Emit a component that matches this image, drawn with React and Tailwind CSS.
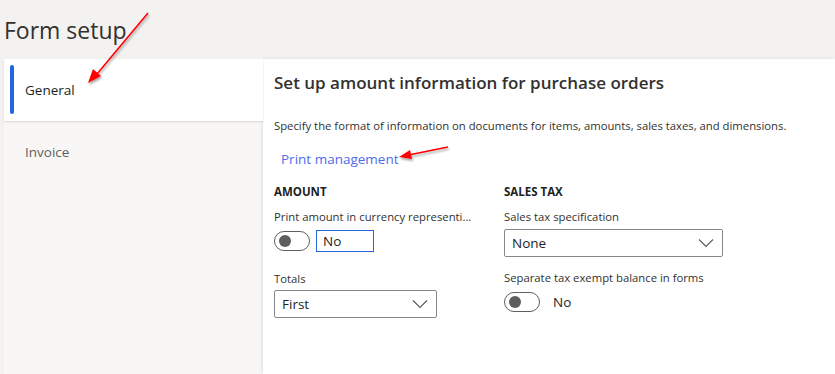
import { useState } from 'react'

const font = { fontFamily: '"Segoe UI", "Open Sans", "Noto Sans", sans-serif' }

function Toggle({ on }) {
  return (
    <div className="w-[36px] h-[20px] rounded-full border border-[#605e5c] bg-white flex items-center px-[4px]">
      <div className={`w-[12px] h-[12px] rounded-full bg-[#605e5c] ${on ? 'ml-auto' : ''}`} />
    </div>
  )
}

function Select({ value, width }) {
  return (
    <div className={`${width} h-[28px] border border-[#8a8886] rounded-[2px] bg-white flex items-center justify-between pl-[7px] pr-[8px]`}>
      <span className="text-[13.5px] text-[#201f1e]">{value}</span>
      <svg width="16" height="10" viewBox="0 0 16 10" fill="none">
        <path d="M1 1.5 L8 8.5 L15 1.5" stroke="#605e5c" strokeWidth="1.2" />
      </svg>
    </div>
  )
}

export default function App() {
  const [tab, setTab] = useState('General')

  return (
    <div className="relative w-[835px] h-[374px] bg-[#f3f2f1] overflow-hidden text-[#323130]" style={font}>
      <h1 className="pl-[4px] pt-[14px] h-[59px] text-[23px] leading-[32px] font-normal text-[#323130]">Form setup</h1>

      <div className="flex ml-[4px] h-[315px]">
        <div className="w-[259px] bg-[#f8f7f6] flex flex-col">
          {['General', 'Invoice'].map((t) => (
            <div
              key={t}
              onClick={() => setTab(t)}
              className={`h-[62px] flex items-center pl-[21px] relative cursor-pointer ${tab === t ? 'bg-white shadow-[0_1px_2px_rgba(0,0,0,0.12)] text-[#201f1e]' : 'text-[#605e5c]'}`}
            >
              {tab === t && <div className="absolute left-[6px] top-[6px] bottom-[7px] w-[4px] rounded-full bg-[#2266e3]" />}
              <span className="text-[13.5px]">{t}</span>
            </div>
          ))}
        </div>

        <div className="flex-1 bg-white shadow-[-1px_0_3px_rgba(0,0,0,0.1)] pl-[11px] pt-[12px]">
          <h2 className="text-[17px] leading-[24px] font-semibold text-[#323130]">Set up amount information for purchase orders</h2>
          <p className="mt-[23px] text-[11.3px] leading-[16px] text-[#323130]">
            Specify the format of information on documents for items, amounts, sales taxes, and dimensions.
          </p>
          <div className="mt-[16px] pl-[7px] text-[13.5px] leading-[18px] text-[#4f6bed]">Print management</div>

          <div className="flex mt-[16px]">
            <div className="w-[230px]">
              <div className="text-[11.5px] leading-[16px] font-bold text-[#201f1e]">AMOUNT</div>
              <div className="mt-[9px] text-[11.3px] leading-[16px] text-[#323130]">Print amount in currency representi...</div>
              <div className="mt-[5px] flex items-center gap-[6px]">
                <Toggle on={false} />
                <div className="w-[58px] h-[22px] border border-[#2266e3] flex items-center pl-[6px] text-[13.5px] text-[#201f1e]">No</div>
              </div>
              <div className="mt-[19px] text-[11.3px] leading-[16px] text-[#323130]">Totals</div>
              <div className="mt-[3px]">
                <Select value="First" width="w-[163px]" />
              </div>
            </div>

            <div>
              <div className="text-[11.5px] leading-[16px] font-bold text-[#201f1e]">SALES TAX</div>
              <div className="mt-[9px] text-[11.3px] leading-[16px] text-[#323130]">Sales tax specification</div>
              <div className="mt-[4px]">
                <Select value="None" width="w-[219px]" />
              </div>
              <div className="mt-[13px] text-[11.3px] leading-[16px] text-[#323130]">Separate tax exempt balance in forms</div>
              <div className="mt-[6px] flex items-center gap-[13px]">
                <Toggle on={false} />
                <span className="text-[13.5px] text-[#201f1e]">No</span>
              </div>
            </div>
          </div>
        </div>
      </div>

      <svg className="absolute inset-0 pointer-events-none" width="835" height="374">
        <defs>
          <filter id="sh" x="-20%" y="-20%" width="140%" height="140%">
            <feDropShadow dx="1" dy="2" stdDeviation="1.2" floodColor="#000" floodOpacity="0.35" />
          </filter>
        </defs>
        <g filter="url(#sh)">
          <line x1="148" y1="13" x2="97" y2="74" stroke="#ff0000" strokeWidth="1.6" />
          <polygon points="88,83 93,69 101,76" fill="#ff0000" />
          <line x1="448" y1="147" x2="411" y2="154.5" stroke="#ff0000" strokeWidth="1.6" />
          <polygon points="399,157 410,150 412,159" fill="#ff0000" />
        </g>
      </svg>
    </div>
  )
}
